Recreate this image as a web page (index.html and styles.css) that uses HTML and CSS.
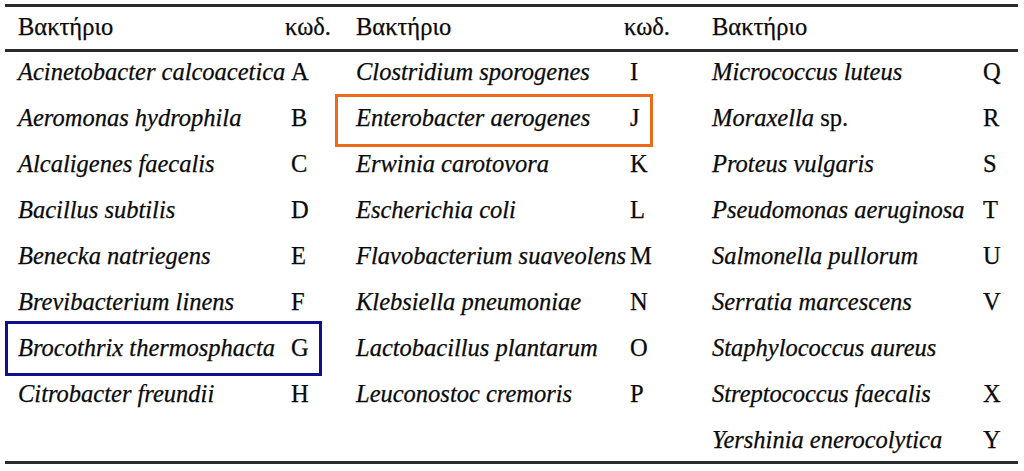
FILE: index.html
```html
<!DOCTYPE html>
<html>
<head>
<meta charset="utf-8">
<title>Βακτήρια</title>
<link rel="stylesheet" href="styles.css">
</head>
<body>
<div class="table">
  <div class="group g1">
    <div class="row head"><span class="name">Βακτήριο</span><span class="code">κωδ.</span></div>
    <div class="row"><span class="name"><i>Acinetobacter calcoacetica</i></span><span class="code">A</span></div>
    <div class="row"><span class="name"><i>Aeromonas hydrophila</i></span><span class="code">B</span></div>
    <div class="row"><span class="name"><i>Alcaligenes faecalis</i></span><span class="code">C</span></div>
    <div class="row"><span class="name"><i>Bacillus subtilis</i></span><span class="code">D</span></div>
    <div class="row"><span class="name"><i>Benecka natriegens</i></span><span class="code">E</span></div>
    <div class="row"><span class="name"><i>Brevibacterium linens</i></span><span class="code">F</span></div>
    <div class="row mark-blue"><span class="name"><i>Brocothrix thermosphacta</i></span><span class="code">G</span></div>
    <div class="row"><span class="name"><i>Citrobacter freundii</i></span><span class="code">H</span></div>
  </div>
  <div class="group g2">
    <div class="row head"><span class="name">Βακτήριο</span><span class="code">κωδ.</span></div>
    <div class="row"><span class="name"><i>Clostridium sporogenes</i></span><span class="code">I</span></div>
    <div class="row mark-orange"><span class="name"><i>Enterobacter aerogenes</i></span><span class="code">J</span></div>
    <div class="row"><span class="name"><i>Erwinia carotovora</i></span><span class="code">K</span></div>
    <div class="row"><span class="name"><i>Escherichia coli</i></span><span class="code">L</span></div>
    <div class="row"><span class="name"><i>Flavobacterium suaveolens</i></span><span class="code">M</span></div>
    <div class="row"><span class="name"><i>Klebsiella pneumoniae</i></span><span class="code">N</span></div>
    <div class="row"><span class="name"><i>Lactobacillus plantarum</i></span><span class="code">O</span></div>
    <div class="row"><span class="name"><i>Leuconostoc cremoris</i></span><span class="code">P</span></div>
  </div>
  <div class="group g3">
    <div class="row head"><span class="name">Βακτήριο</span><span class="code"></span></div>
    <div class="row"><span class="name"><i>Micrococcus luteus</i></span><span class="code">Q</span></div>
    <div class="row"><span class="name"><i>Moraxella</i> sp.</span><span class="code">R</span></div>
    <div class="row"><span class="name"><i>Proteus vulgaris</i></span><span class="code">S</span></div>
    <div class="row"><span class="name"><i>Pseudomonas aeruginosa</i></span><span class="code">T</span></div>
    <div class="row"><span class="name"><i>Salmonella pullorum</i></span><span class="code">U</span></div>
    <div class="row"><span class="name"><i>Serratia marcescens</i></span><span class="code">V</span></div>
    <div class="row"><span class="name"><i>Staphylococcus aureus</i></span><span class="code"></span></div>
    <div class="row"><span class="name"><i>Streptococcus faecalis</i></span><span class="code">X</span></div>
    <div class="row"><span class="name"><i>Yershinia enerocolytica</i></span><span class="code">Y</span></div>
  </div>
</div>
</body>
</html>
```

FILE: styles.css
```css
html, body {
  margin: 0;
  padding: 0;
  background: #ffffff;
}

.table {
  position: relative;
  margin: 4px 0 0 5px;
  width: 1013px;
  height: 460px;
  box-sizing: border-box;
  border-top: 3px solid #2b2b2b;
  display: grid;
  grid-template-columns: 335px 355px 323px;
  font-family: "Liberation Serif", serif;
  font-size: 24.5px;
  color: #0a0a0a;
  -webkit-text-stroke: 0.25px #0a0a0a;
}

.table::before {
  content: "";
  position: absolute;
  left: 0;
  right: 0;
  top: 42px;
  border-top: 3px solid #2b2b2b;
}

.table::after {
  content: "";
  position: absolute;
  left: 0;
  right: 0;
  bottom: 0;
  border-top: 3px solid #2b2b2b;
}

.group {
  display: flex;
  flex-direction: column;
}

.row {
  position: relative;
  display: flex;
  height: 46px;
  line-height: 40px;
  white-space: nowrap;
}

.row.head {
  height: 45px;
}

.name,
.code {
  display: block;
  box-sizing: border-box;
  font-family: "Liberation Serif", serif;
}

.name i {
  font-family: "Liberation Serif", serif;
  font-style: italic;
}

.g1 .name { width: 286px; padding-left: 13px; }
.g2 .name { width: 290px; padding-left: 16px; }
.g3 .name { width: 288px; padding-left: 17px; }

.head .code {
  margin-left: -6px;
}

.mark-blue::after,
.mark-orange::after {
  content: "";
  position: absolute;
  box-sizing: border-box;
  border: 3px solid;
  pointer-events: none;
}

.mark-blue::after {
  border-color: #10108a;
  left: 0;
  width: 317px;
  top: -7px;
  height: 55px;
}

.mark-orange::after {
  border-color: #ec6a1c;
  left: -5px;
  width: 318px;
  top: -4px;
  height: 53px;
}
```
